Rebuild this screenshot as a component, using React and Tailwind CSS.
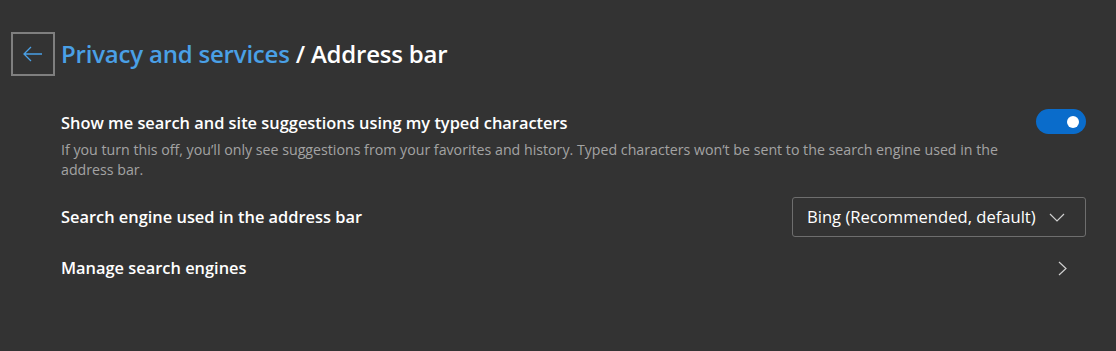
import React, { useState } from "react";

const font = { fontFamily: '"Open Sans", "Noto Sans", sans-serif' };

const BackButton = () => (
  <button className="w-[44px] h-[44px] border-2 border-[#7f7f7f] flex items-center justify-center shrink-0">
    <svg width="20" height="16" viewBox="0 0 20 16" fill="none">
      <path d="M19 8H1M8 1L1 8l7 7" stroke="#4aa0e6" strokeWidth="1.3" />
    </svg>
  </button>
);

const Toggle = ({ on, onChange }) => (
  <button
    onClick={() => onChange(!on)}
    className={`w-[50px] h-[25px] rounded-full flex items-center px-[7px] ${
      on ? "bg-[#0a6ccb] justify-end" : "bg-transparent border border-gray-400 justify-start"
    }`}
  >
    <span className="w-[12px] h-[12px] rounded-full bg-white" />
  </button>
);

export default function App() {
  const [suggest, setSuggest] = useState(true);

  return (
    <div className="w-[1116px] h-[351px] bg-[#333333] text-white pl-[11px] pr-[30px] pt-[32px]" style={font}>
      <div className="flex items-center gap-[6px]">
        <BackButton />
        <h1 className="text-[24px] font-semibold leading-[44px] tracking-[-0.2px]">
          <span className="text-[#4aa0e6]">Privacy and services</span>
          <span> / Address bar</span>
        </h1>
      </div>

      <div className="pl-[50px] mt-[35px]">
        <div className="flex items-start justify-between">
          <div className="max-w-[945px]">
            <div className="text-[16.4px] font-semibold leading-[24px]">
              Show me search and site suggestions using my typed characters
            </div>
            <div className="text-[14.2px] leading-[20px] text-[#a3a3a3] mt-[5px]">
              If you turn this off, you’ll only see suggestions from your favorites and history. Typed characters won’t be sent to the search engine used in the address bar.
            </div>
          </div>
          <div className="mt-[-2px]">
            <Toggle on={suggest} onChange={setSuggest} />
          </div>
        </div>

        <div className="flex items-center justify-between mt-[17px] h-[40px]">
          <div className="text-[16.4px] font-semibold">Search engine used in the address bar</div>
          <button className="w-[294px] h-[40px] border border-[#6e6e6e] rounded-[3px] flex items-center justify-between pl-[14px] pr-[20px]">
            <span className="text-[16.6px] text-white">Bing (Recommended, default)</span>
            <svg width="16" height="9" viewBox="0 0 16 9" fill="none">
              <path d="M1 1l7 7 7-7" stroke="#cfcfcf" strokeWidth="1.2" />
            </svg>
          </button>
        </div>

        <div className="flex items-center justify-between h-[40px] mt-[11px]">
          <div className="text-[16.4px] font-semibold">Manage search engines</div>
          <svg className="mr-[19px]" width="9" height="15" viewBox="0 0 9 15" fill="none">
            <path d="M1 1l7 6.5L1 14" stroke="#cfcfcf" strokeWidth="1.2" />
          </svg>
        </div>
      </div>
    </div>
  );
}
